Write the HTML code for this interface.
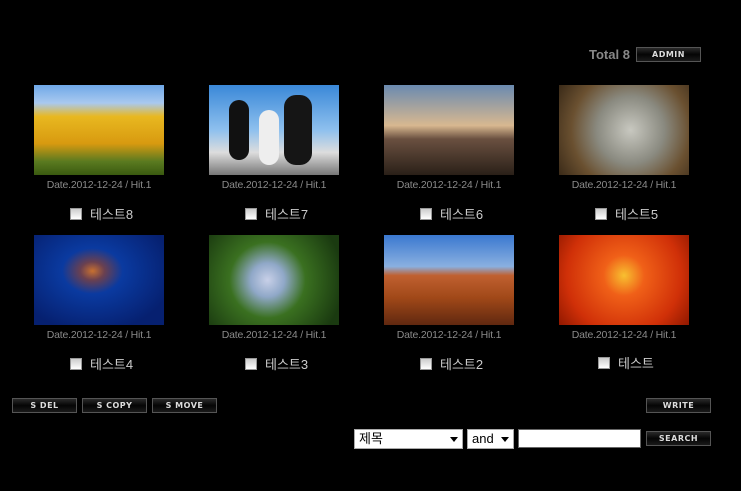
<!DOCTYPE html>
<html><head><meta charset="utf-8"><style>
body{margin:0;width:741px;height:491px;background:#000;position:relative;overflow:hidden;font-family:"Liberation Sans","Noto Sans CJK KR",sans-serif}
.a{position:absolute}
.btn{position:absolute;width:63px;height:13px;border:1px solid #555;background:linear-gradient(#2a2a2a,#050505 50%,#1a1a1a);color:#ddd;font:bold 8px "DejaVu Sans",sans-serif;letter-spacing:0.5px;text-align:center;line-height:13px}
.img{position:absolute;width:130px;height:90px}
.d{position:absolute;width:130px;text-align:center;color:#8a8a8a;font-size:10.5px;letter-spacing:-0.2px}
.c{position:absolute;color:#ccc;font-size:13px}
.c i{display:inline-block;width:10px;height:10px;border:1px solid #999;background:linear-gradient(#ccc,#fff);vertical-align:-1px;margin-right:8px}
</style></head><body>
<div class="a" style="left:589px;top:47px;color:#888;font-weight:bold;font-size:13px">Total 8</div>
<div class="btn" style="left:636px;top:47px">ADMIN</div>

<div class="img" style="left:34px;top:85px;background:linear-gradient(#6fa8e8 0,#a9c9ef 20%,#e8b820 35%,#d89a10 65%,#5a7a20 85%,#3a5a10)"></div>
<div class="img" style="left:209px;top:85px;background:linear-gradient(#3a88d8,#8ec0ee 50%,#ddd 75%,#777)"><div class="a" style="left:20px;top:15px;width:20px;height:60px;background:#111;border-radius:10px"></div><div class="a" style="left:75px;top:10px;width:28px;height:70px;background:#151515;border-radius:12px"></div><div class="a" style="left:50px;top:25px;width:20px;height:55px;background:#eee;border-radius:10px"></div></div>
<div class="img" style="left:384px;top:85px;background:linear-gradient(#6a8ab0,#d8b890 45%,#6a5040 60%,#2a2018)"></div>
<div class="img" style="left:559px;top:85px;background:radial-gradient(circle at 55% 50%,#c8c8c0 0,#8a8a80 40%,#6a5030 70%,#3a2a18)"></div>
<div class="img" style="left:34px;top:235px;background:radial-gradient(ellipse at 45% 40%,#c87030 0,#6a4050 12%,#0a3aa0 30%,#062070 80%)"></div>
<div class="img" style="left:209px;top:235px;background:radial-gradient(circle at 45% 50%,#c8d0e8 0,#90a8c8 20%,#3a7020 45%,#1a3a10 90%)"></div>
<div class="img" style="left:384px;top:235px;background:linear-gradient(#3a78d0,#8ab0e0 35%,#c06030 45%,#a04818 70%,#602810)"></div>
<div class="img" style="left:559px;top:235px;background:radial-gradient(circle at 50% 45%,#f8c030 0,#f06018 25%,#d03008 70%,#901800)"></div>

<div class="d" style="left:34px;top:179px">Date.2012-12-24 / Hit.1</div>
<div class="d" style="left:209px;top:179px">Date.2012-12-24 / Hit.1</div>
<div class="d" style="left:384px;top:179px">Date.2012-12-24 / Hit.1</div>
<div class="d" style="left:559px;top:179px">Date.2012-12-24 / Hit.1</div>
<div class="d" style="left:34px;top:329px">Date.2012-12-24 / Hit.1</div>
<div class="d" style="left:209px;top:329px">Date.2012-12-24 / Hit.1</div>
<div class="d" style="left:384px;top:329px">Date.2012-12-24 / Hit.1</div>
<div class="d" style="left:559px;top:329px">Date.2012-12-24 / Hit.1</div>

<div class="c" style="left:70px;top:204px"><i></i>테스트8</div>
<div class="c" style="left:245px;top:204px"><i></i>테스트7</div>
<div class="c" style="left:420px;top:204px"><i></i>테스트6</div>
<div class="c" style="left:595px;top:204px"><i></i>테스트5</div>
<div class="c" style="left:70px;top:354px"><i></i>테스트4</div>
<div class="c" style="left:245px;top:354px"><i></i>테스트3</div>
<div class="c" style="left:420px;top:354px"><i></i>테스트2</div>
<div class="c" style="left:598px;top:353px"><i></i>테스트</div>

<div class="btn" style="left:12px;top:398px">S DEL</div>
<div class="btn" style="left:82px;top:398px">S COPY</div>
<div class="btn" style="left:152px;top:398px">S MOVE</div>
<div class="btn" style="left:646px;top:398px">WRITE</div>
<div class="btn" style="left:646px;top:431px">SEARCH</div>

<div class="a" style="left:354px;top:429px;width:107px;height:18px;background:#fff;border:1px solid #aaa;font-size:13px;line-height:18px;color:#000;text-indent:4px">제목<span class="a" style="right:4px;top:7px;border:4px solid transparent;border-top:5px solid #000;border-bottom:0"></span></div>
<div class="a" style="left:467px;top:429px;width:45px;height:18px;background:#fff;border:1px solid #aaa;font-size:13px;line-height:18px;color:#000;text-indent:4px">and<span class="a" style="right:4px;top:7px;border:4px solid transparent;border-top:5px solid #000;border-bottom:0"></span></div>
<div class="a" style="left:518px;top:429px;width:121px;height:17px;background:#fff;border:1px solid #666"></div>
</body></html>
